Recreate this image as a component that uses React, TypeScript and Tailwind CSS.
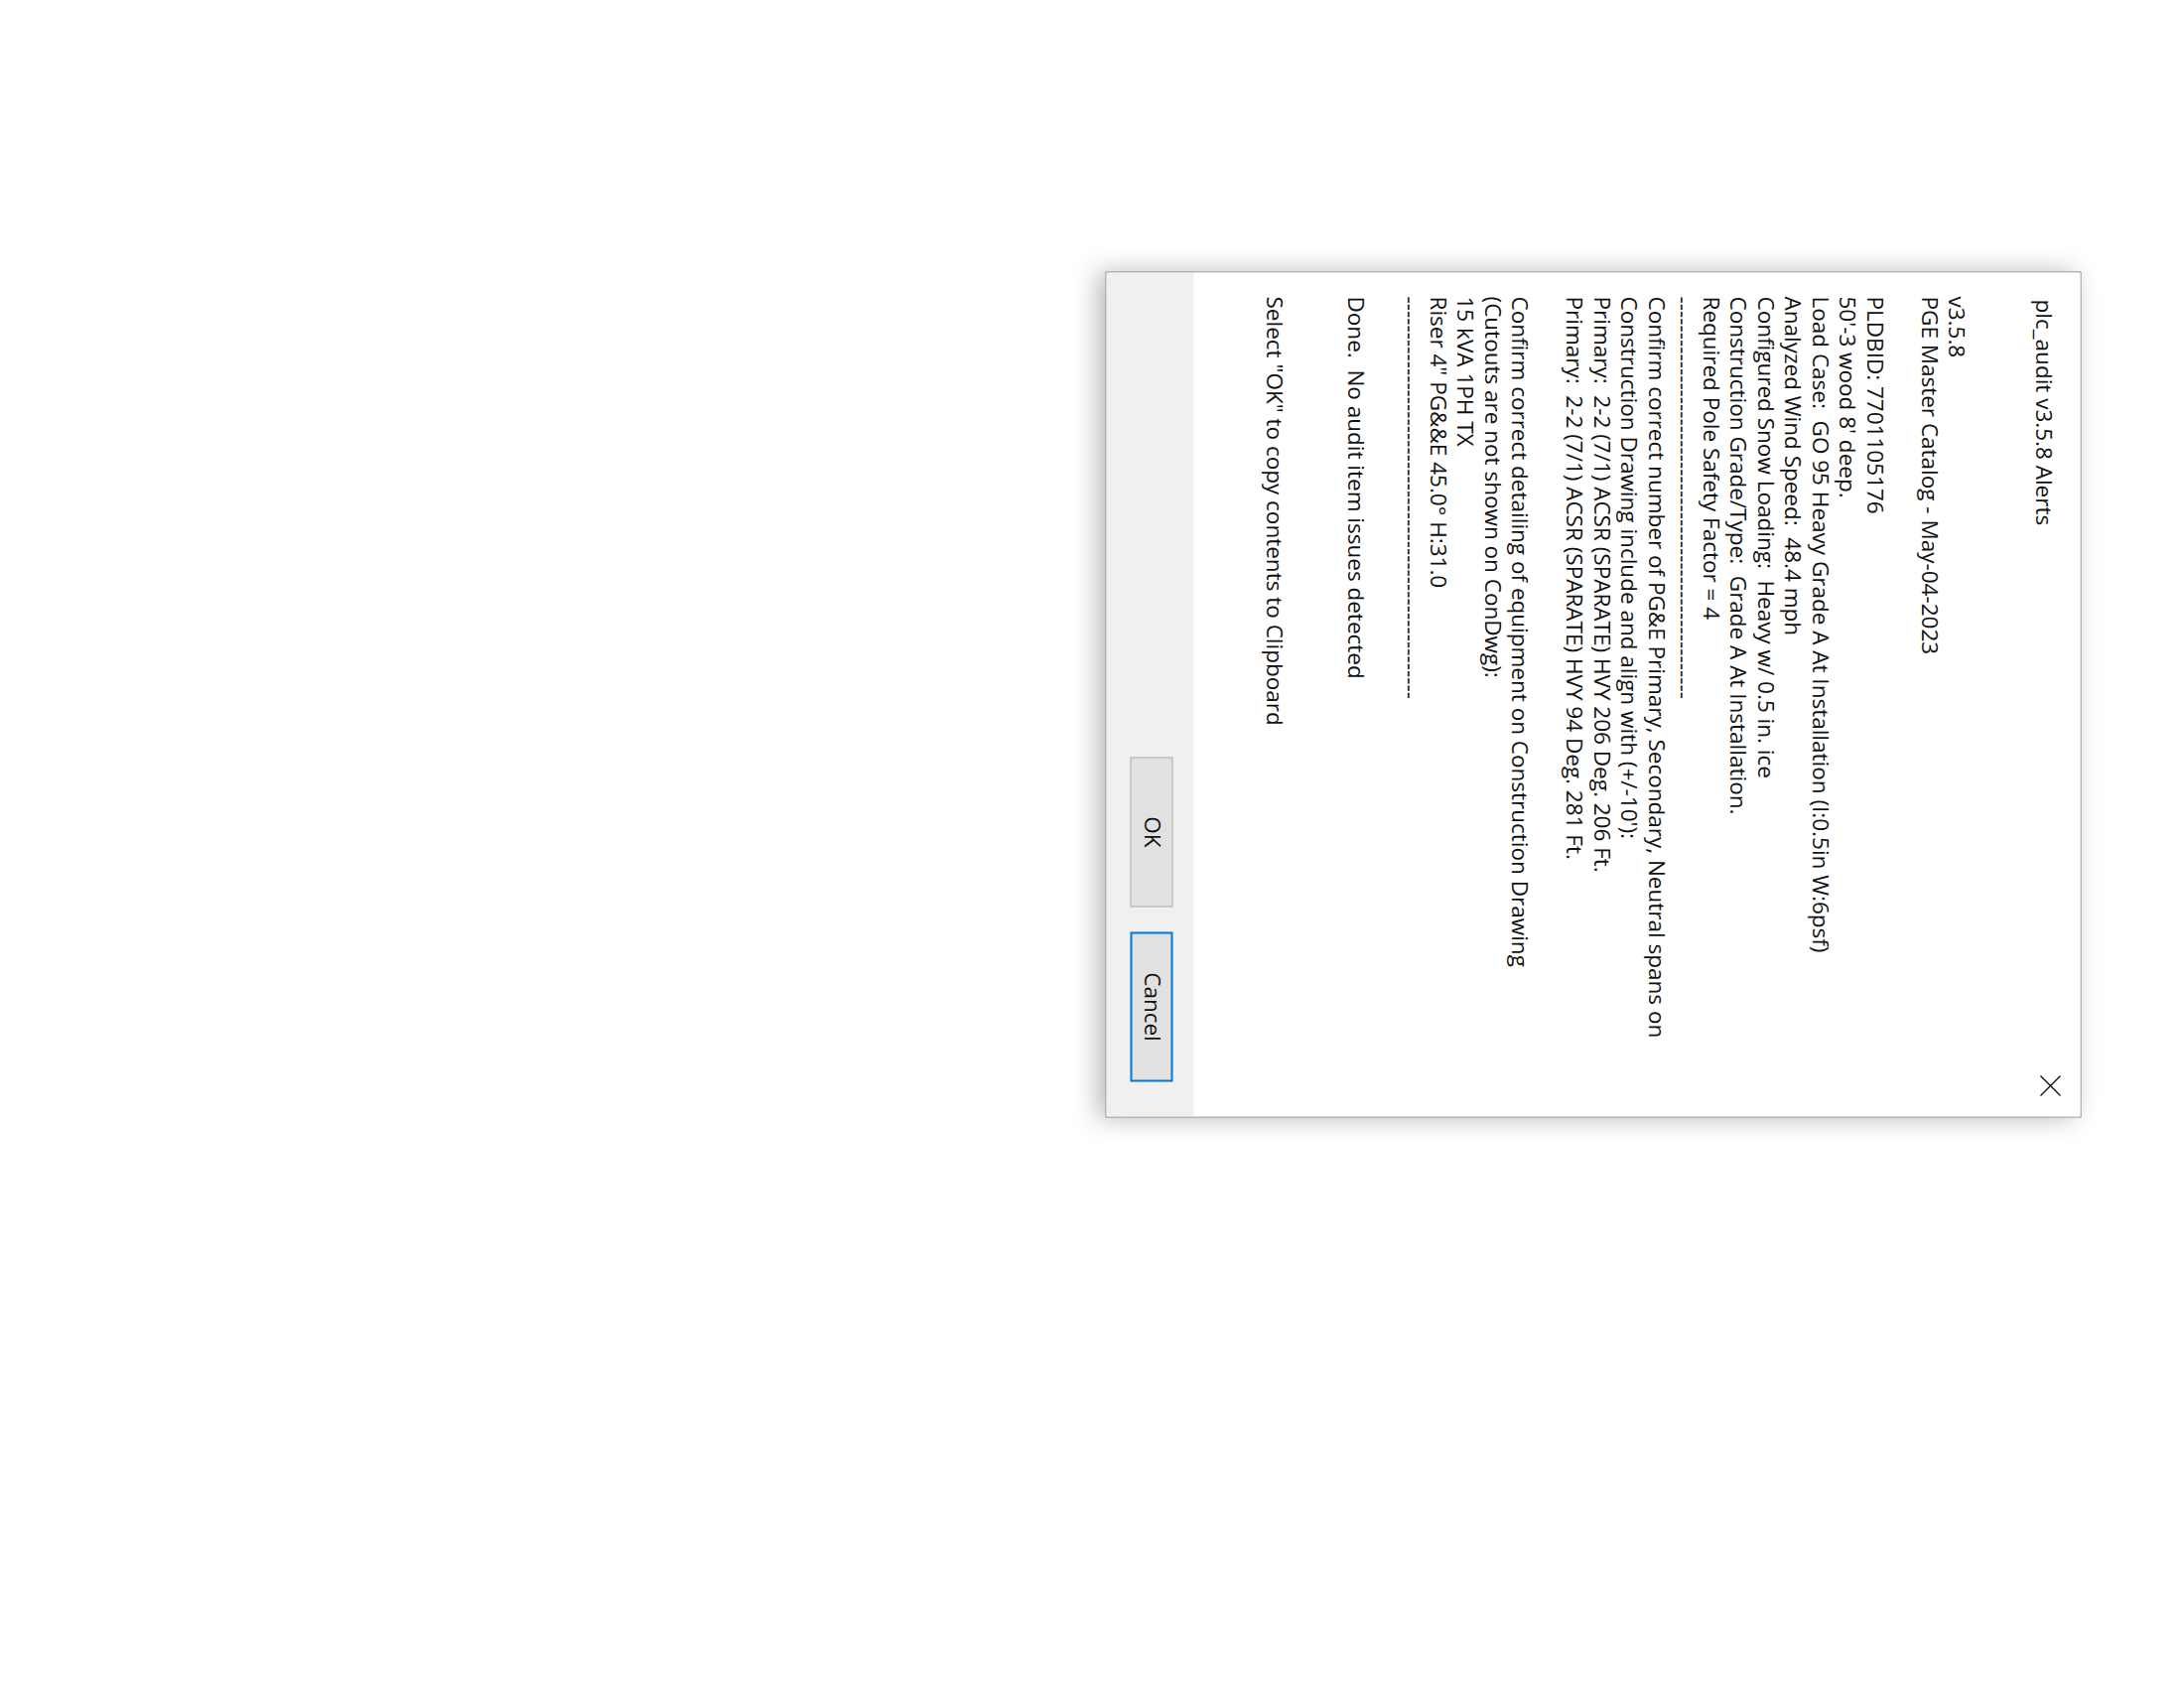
const dashes = '-'.repeat(56);

const lines = [
  'v3.5.8',
  'PGE Master Catalog - May-04-2023',
  '',
  'PLDBID: 7701105176',
  "50'-3 wood 8' deep.",
  'Load Case:  GO 95 Heavy Grade A At Installation (I:0.5in W:6psf)',
  'Analyzed Wind Speed:  48.4 mph',
  'Configured Snow Loading:  Heavy w/ 0.5 in. ice',
  'Construction Grade/Type:  Grade A At Installation.',
  'Required Pole Safety Factor = 4',
  dashes,
  'Confirm correct number of PG&E Primary, Secondary, Neutral spans on',
  "Construction Drawing include and align with (+/-10'):",
  'Primary:  2-2 (7/1) ACSR (SPARATE) HVY 206 Deg. 206 Ft.',
  'Primary:  2-2 (7/1) ACSR (SPARATE) HVY 94 Deg. 281 Ft.',
  '',
  'Confirm correct detailing of equipment on Construction Drawing',
  '(Cutouts are not shown on ConDwg):',
  '15 kVA 1PH TX',
  'Riser 4" PG&&E 45.0° H:31.0',
  dashes,
  '',
  'Done.  No audit item issues detected',
  '',
  '',
  'Select "OK" to copy contents to Clipboard',
];

const CloseIcon = () => (
  <svg viewBox="0 0 22 22" className="h-[22px] w-[22px]" fill="none" stroke="#111" strokeWidth="1.4">
    <path d="M1 1 L21 21 M21 1 L1 21" />
  </svg>
);

const AlertDialog = () => {
  return (
    <div className="flex h-[983px] w-[852px] shrink-0 rotate-90 flex-col border border-[#7a7a7a] bg-white font-['Open_Sans',sans-serif] text-[22.5px] text-[#111] shadow-[0_8px_24px_rgba(0,0,0,0.28)]">
      <div className="flex flex-1 flex-col bg-white">
        <div className="flex items-start justify-between pl-[27px] pr-[20px] pt-[19px]">
          <span className="mt-[4px] h-[27.5px] leading-[27.5px]">plc_audit v3.5.8 Alerts</span>
          <CloseIcon />
        </div>
        <div className="mt-[60px] pl-[24px] leading-[27.5px]">
          {lines.map((line, i) => (
            <div key={i} className="h-[27.5px] whitespace-pre">
              {line}
            </div>
          ))}
        </div>
      </div>
      <div className="flex h-[88px] items-start justify-end gap-[25px] bg-[#f0f0f0] pr-[35px] pt-[21px]">
        <button className="h-[43px] w-[151px] border border-[#adadad] bg-[#e1e1e1] text-[22.5px] leading-none">OK</button>
        <button className="h-[43px] w-[151px] border-2 border-[#0078d7] bg-[#e1e1e1] text-[22.5px] leading-none">Cancel</button>
      </div>
    </div>
  );
};

export default function App() {
  return (
    <div className="min-h-[1700px] w-[2200px] bg-white pl-[1113px] pt-[273px]">
      <div className="flex h-[852px] w-[983px] items-center justify-center">
        <AlertDialog />
      </div>
    </div>
  );
}
